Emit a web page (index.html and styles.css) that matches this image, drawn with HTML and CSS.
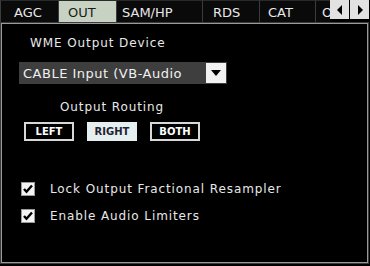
FILE: index.html
```html
<!DOCTYPE html>
<html lang="en">
<head>
    <meta charset="UTF-8">
    <title>Output Settings</title>
    <link rel="stylesheet" href="styles.css">
</head>
<body>
    <div class="tabbar">
        <div class="tabs">
            <div class="tab tab-agc">AGC</div>
            <div class="tab tab-out active">OUT</div>
            <div class="tab tab-sam">SAM/HP</div>
            <div class="tab tab-rds">RDS</div>
            <div class="tab tab-cat">CAT</div>
            <div class="tab tab-more">OPT</div>
        </div>
        <div class="scroll-btn">
            <svg width="8" height="10" viewBox="0 0 8 10"><path d="M6 0 L6 10 L1 5 Z" fill="#000"/></svg>
        </div>
        <div class="scroll-btn">
            <svg width="8" height="10" viewBox="0 0 8 10"><path d="M2 0 L2 10 L7 5 Z" fill="#000"/></svg>
        </div>
    </div>

    <div class="panel">
        <div class="label device-label">WME Output Device</div>

        <div class="select">
            <span class="select-text">CABLE Input (VB-Audio</span>
            <span class="select-arrow">
                <svg width="10" height="6" viewBox="0 0 10 6"><path d="M0 0 L10 0 L5 6 Z" fill="#000"/></svg>
            </span>
        </div>

        <div class="label routing-label">Output Routing</div>

        <div class="routing">
            <button class="route">LEFT</button>
            <button class="route active">RIGHT</button>
            <button class="route">BOTH</button>
        </div>

        <div class="check-row first">
            <span class="check">
                <svg width="14" height="14" viewBox="0 0 14 14">
                    <rect x="0.5" y="0.5" width="13" height="13" fill="#f4f4f4" stroke="#9a9a9a"/>
                    <path d="M3 7 L5.5 9.8 L11 3.5" fill="none" stroke="#000" stroke-width="2.4"/>
                </svg>
            </span>
            <span class="label">Lock Output Fractional Resampler</span>
        </div>

        <div class="check-row">
            <span class="check">
                <svg width="14" height="14" viewBox="0 0 14 14">
                    <rect x="0.5" y="0.5" width="13" height="13" fill="#f4f4f4" stroke="#9a9a9a"/>
                    <path d="M3 7 L5.5 9.8 L11 3.5" fill="none" stroke="#000" stroke-width="2.4"/>
                </svg>
            </span>
            <span class="label">Enable Audio Limiters</span>
        </div>
    </div>
</body>
</html>
```

FILE: styles.css
```css
/* General Styles */
body {
    margin: 0;
    width: 370px;
    height: 266px;
    overflow: hidden;
    background: #000;
    color: #e8e8e8;
    font-family: "DejaVu Sans", Verdana, sans-serif;
}

/* Tab strip */
.tabbar {
    display: flex;
    height: 23px;
}

.tabs {
    display: flex;
    width: 332px;
    overflow: hidden;
}

.tab {
    flex: none;
    box-sizing: border-box;
    height: 22px;
    line-height: 24px;
    font-size: 13px;
    background: #0a0a0a;
    border-top: 1px solid #2a2a2a;
    border-right: 1px solid #3c3c3c;
    white-space: nowrap;
}

.tab-agc { width: 59px; padding-left: 13px; border-left: 1px solid #3c3c3c; }
.tab-out { width: 58px; padding-left: 9px; }
.tab-sam { width: 86px; padding-left: 5px; }
.tab-rds { width: 57px; padding-left: 10px; }
.tab-cat { width: 56px; padding-left: 8px; }
.tab-more { width: 40px; padding-left: 6px; }

.tab.active {
    background: #c8d2c2;
    color: #1a1a1a;
}

.scroll-btn {
    flex: none;
    width: 19px;
    height: 19px;
    margin-right: 1px;
    background: #e2e2e2;
    display: flex;
    align-items: center;
    justify-content: center;
}

/* Panel */
.panel {
    box-sizing: border-box;
    width: 367px;
    height: 240px;
    margin-left: 1px;
    border: 1px solid #9a9a9a;
    box-shadow: 0 0 0 1px #3a3a3a;
    padding-top: 12px;
}

.label {
    font-size: 12px;
    line-height: 14px;
    letter-spacing: 0.9px;
    white-space: nowrap;
}

.device-label {
    margin-left: 28px;
}

.select {
    display: flex;
    align-items: center;
    width: 208px;
    height: 22px;
    margin: 12px 0 0 17px;
    background: #3e3e3e;
}

.select-text {
    flex: 1;
    padding-left: 4px;
    font-size: 13px;
    letter-spacing: 0.5px;
    color: #f0f0f0;
    white-space: nowrap;
    overflow: hidden;
}

.select-arrow {
    width: 20px;
    height: 20px;
    margin-right: 1px;
    background: #f2f2f2;
    display: flex;
    align-items: center;
    justify-content: center;
}

.routing-label {
    margin: 16px 0 0 58px;
}

.routing {
    display: flex;
    gap: 13px;
    margin: 8px 0 0 22px;
}

.route {
    width: 50px;
    height: 19px;
    padding: 0;
    border: 2px solid #d8d8d8;
    background: #000;
    color: #fff;
    font-family: "DejaVu Sans", Verdana, sans-serif;
    font-size: 10px;
    font-weight: bold;
}

.route.active {
    background: #e6eff0;
    border-color: #e6eff0;
    color: #1e2430;
}

.check-row {
    display: flex;
    align-items: center;
    gap: 15px;
    height: 14px;
    margin: 13px 0 0 19px;
}

.check-row.first {
    margin-top: 41px;
}

.check {
    display: flex;
}
```
